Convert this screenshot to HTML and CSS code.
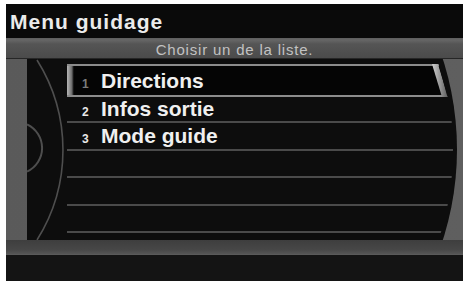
FILE: index.html
```html
<!DOCTYPE html>
<html lang="fr">
<head>
<meta charset="utf-8">
<title>Menu guidage</title>
<link rel="stylesheet" href="styles.css">
</head>
<body>
<div class="screen">
  <div class="title">Menu guidage</div>
  <div class="subtitle">Choisir un de la liste.</div>
  <div class="main">
    <div class="side"></div>
    <div class="frame">
      <svg class="deco" width="70" height="181" viewBox="0 0 70 181" aria-hidden="true">
        <path d="M10 1 A169 169 0 0 1 10 181" fill="none" stroke="#4e4e4e" stroke-width="1.6"/>
        <path d="M0 65.4 A26 26 0 0 1 0 112.6" fill="none" stroke="#4e4e4e" stroke-width="2"/>
      </svg>
      <ul class="list">
        <li class="item selected"><span class="num">1</span><span class="label">Directions</span></li>
        <li class="item second"><span class="num">2</span><span class="label">Infos sortie</span></li>
        <li class="item"><span class="num">3</span><span class="label">Mode guide</span></li>
        <li class="item"></li>
        <li class="item"></li>
        <li class="item"></li>
      </ul>
    </div>
  </div>
  <div class="bottombar"></div>
  <div class="footer"></div>
</div>
</body>
</html>
```

FILE: styles.css
```css
html, body {
  margin: 0;
  padding: 0;
  background: #ffffff;
}

.screen {
  margin: 4px 2px 0 6px;
  height: 277px;
  display: flex;
  flex-direction: column;
  font-family: "Liberation Sans", Arial, sans-serif;
  overflow: hidden;
}

.title {
  height: 34px;
  box-sizing: border-box;
  padding: 3px 0 0 4px;
  line-height: 30px;
  background: #0a0a0a;
  color: #ebebeb;
  font-size: 21px;
  font-weight: bold;
  letter-spacing: 1px;
}

.subtitle {
  height: 21px;
  box-sizing: border-box;
  padding-top: 4px;
  line-height: 16px;
  text-align: center;
  font-size: 15px;
  letter-spacing: 0.8px;
  color: #c2c2c2;
  background: linear-gradient(to bottom, #5e5e5e 0, #666 2px, #555 6px, #4b4b4b 100%);
  border-bottom: 1px solid #262626;
}

.main {
  height: 181px;
  display: flex;
  background: linear-gradient(to right, #5a5a5a, #5f5f5f);
}

.side {
  width: 21px;
  flex: none;
}

.frame {
  flex: 1;
  position: relative;
  background: #0d0d0d;
  clip-path: circle(296px at 134px 50%);
}

.deco {
  position: absolute;
  left: 0;
  top: 0;
}

.list {
  list-style: none;
  margin: 0 0 0 40px;
  padding: 5px 0 0 0;
  height: 100%;
  box-sizing: border-box;
  clip-path: circle(292px at 94px 90.5px);
}

.item {
  box-sizing: border-box;
  height: 27.5px;
  padding-top: 1px;
  line-height: 24px;
  border-bottom: 2px solid #4a4a4a;
  display: flex;
  align-items: baseline;
  color: #f0f0f0;
}

.item.second {
  height: 26px;
  padding-top: 0;
}

.num {
  width: 19px;
  padding-left: 15px;
  flex: none;
  font-size: 12px;
  font-weight: bold;
  color: #e8e8e8;
}

.label {
  font-size: 21px;
  font-weight: bold;
}

.selected {
  position: relative;
  height: 33px;
  margin-right: 15px;
  padding-top: 3px;
  border-top: 2px solid #8c8c8c;
  border-bottom: 2px solid #8c8c8c;
  background:
    linear-gradient(to right, #b4b4b4 0, #9a9a9a 2px, #6a6a6a 5px, #2a2a2a 6px, transparent 7px) no-repeat,
    #050505;
  clip-path: polygon(0 -2px, calc(100% - 10px) -2px, 100% calc(100% + 2px), 0 calc(100% + 2px));
}

.selected::after {
  content: "";
  position: absolute;
  right: 0;
  top: -2px;
  bottom: -2px;
  width: 16px;
  background: linear-gradient(to right, #d0d0d0, #8a8a8a 60%, #5a5a5a);
  clip-path: polygon(0 0, 6px 0, 100% 100%, calc(100% - 6px) 100%);
}

.selected .num {
  color: #7c7c7c;
}

.bottombar {
  height: 15px;
  box-sizing: border-box;
  background: linear-gradient(to bottom, #3e3e3e, #474747 70%, #555 100%);
  border-bottom: 1px solid #5a5a5a;
}

.footer {
  flex: 1;
  background: #141414;
}
```
